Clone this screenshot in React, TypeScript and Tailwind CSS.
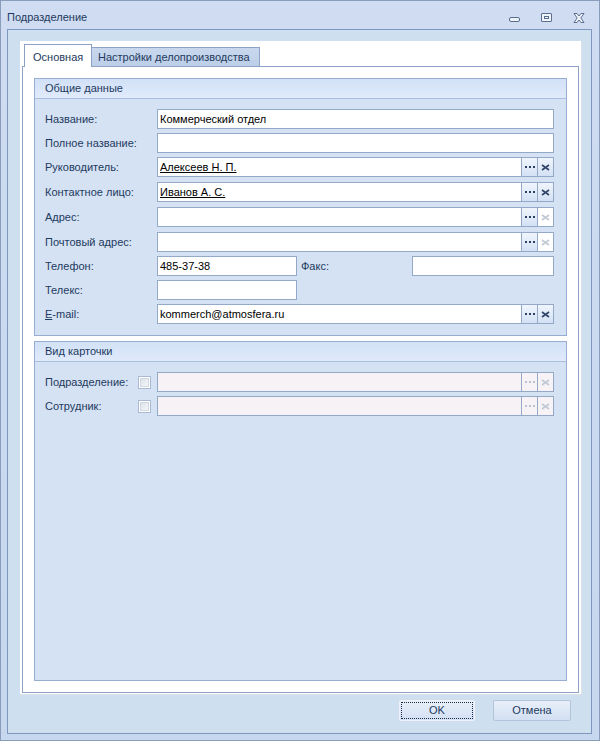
import type { ReactNode } from 'react';

type BtnState = 'on' | 'clearOff' | 'off';

function Dots({ dim }: { dim?: boolean }) {
  return (
    <svg width="10" height="2" viewBox="0 0 10 2" className={dim ? 'fill-[#b9c3d3]' : 'fill-[#2b3f63]'}>
      <rect x="0" y="0" width="2" height="2" />
      <rect x="4" y="0" width="2" height="2" />
      <rect x="8" y="0" width="2" height="2" />
    </svg>
  );
}

function Cross({ dim }: { dim?: boolean }) {
  return (
    <svg width="9" height="7" viewBox="0 0 9 7" className={dim ? 'stroke-[#c2cad6]' : 'stroke-[#33476b]'}>
      <path d="M1 1 L8 6 M8 1 L1 6" strokeWidth="1.7" fill="none" />
    </svg>
  );
}

function Lookup({ value, link, state }: { value?: string; link?: boolean; state: BtnState }) {
  const off = state === 'off';
  const btnOn = 'bg-gradient-to-b from-[#f0f5fc] to-[#d3e1f5]';
  return (
    <div className={`flex h-[20px] flex-1 border border-[#94a8c8] ${off ? 'bg-[#f6f2f6]' : 'bg-white'}`}>
      <div className="flex flex-1 items-center px-[2px] text-black">
        {value && <span className={link ? 'underline' : ''}>{value}</span>}
      </div>
      <div className={`flex w-[16px] items-center justify-center border-l border-[#94a8c8] ${off ? '' : btnOn}`}>
        <Dots dim={off} />
      </div>
      <div
        className={`flex w-[16px] items-center justify-center border-l border-[#94a8c8] ${
          state === 'on' ? btnOn : ''
        }`}
      >
        <Cross dim={state !== 'on'} />
      </div>
    </div>
  );
}

function Input({ value, className = 'flex-1' }: { value?: string; className?: string }) {
  return (
    <div className={`flex h-[20px] items-center border border-[#94a8c8] bg-white px-[2px] text-black ${className}`}>
      {value}
    </div>
  );
}

function Row({ label, className, children }: { label: ReactNode; className: string; children: ReactNode }) {
  return (
    <div className={`flex h-[20px] items-center ${className}`}>
      <div className="w-[112px] shrink-0">{label}</div>
      {children}
    </div>
  );
}

function Check() {
  return (
    <div className="mr-[6px] flex h-[13px] w-[13px] items-center justify-center border border-[#aab9d3] bg-white">
      <div className="h-[9px] w-[9px] border border-[#d2d8e2] bg-gradient-to-br from-[#dde2ea] to-[#f4f6f9]" />
    </div>
  );
}

function GroupHeader({ title }: { title: string }) {
  return (
    <div className="flex h-[20px] items-center border-b border-[#a9bfe0] bg-gradient-to-b from-[#d2e1f7] to-[#e0eafb] pl-[10px]">
      {title}
    </div>
  );
}

export default function App() {
  return (
    <div className="h-[741px] w-[600px] border border-[#8a9cbb] bg-gradient-to-b from-[#cfdcf1] to-[#c6d7ee] font-['Liberation_Sans',Arial,sans-serif] text-[11px] text-[#1e3a5e]">
      {/* title bar */}
      <div className="flex h-[28px] items-center pl-[6px] pt-[5px]">
        <span className="flex-1">Подразделение</span>
        <div className="mr-[14px] flex items-center gap-[21px]">
          <div className="mt-[4px] h-[5px] w-[11px] rounded-[2px] border border-[#5b6e8e] bg-[#eef3fa]" />
          <div className="flex h-[9px] w-[11px] items-center justify-center rounded-[1px] border border-[#5b6e8e] bg-[#eef3fa]">
            <div className="h-[3px] w-[5px] border border-[#5b6e8e]" />
          </div>
          <svg width="12" height="10" viewBox="0 0 12 10">
            <path
              d="M1 0.5 H4 L6 3 L8 0.5 H11 L7.8 5 L11 9.5 H8 L6 7 L4 9.5 H1 L4.2 5 Z"
              fill="#eef3fa"
              stroke="#5b6e8e"
              strokeWidth="1"
            />
          </svg>
        </div>
      </div>

      {/* frame */}
      <div className="ml-[6px] flex h-[705px] w-[585px] flex-col border border-[#7e97bf] bg-[#cedff0]">
        <div className="ml-[12px] mt-[11px] flex h-[653px] w-[561px] flex-col bg-white pb-[1px] shadow-[1px_1px_0_#dde2ea]">
          {/* tabs */}
          <div className="flex h-[25px] items-end pl-[4px]">
            <div className="relative z-10 -mb-px flex h-[23px] w-[68px] items-start border border-b-0 border-[#8da2c4] bg-white pl-[8px] pt-[4px]">
              Основная
            </div>
            <div className="flex h-[19px] w-[168px] items-center border border-b-0 border-l-0 border-[#8da2c4] bg-gradient-to-b from-[#c9d8ed] to-[#bccfe8] pl-[6px]">
              Настройки делопроизводства
            </div>
          </div>

          {/* tab panel */}
          <div className="ml-[2px] flex w-[557px] flex-1 flex-col border border-[#8da2c4] bg-white p-[11px]">
            <div className="border border-[#97add1] bg-[#d5e2f4]">
              <GroupHeader title="Общие данные" />
              <div className="pb-[11px] pl-[10px] pr-[12px] pt-[10px]">
                <Row label="Название:" className="">
                  <Input value="Коммерческий отдел" />
                </Row>
                <Row label="Полное название:" className="mt-[4px]">
                  <Input />
                </Row>
                <Row label="Руководитель:" className="mt-[4px]">
                  <Lookup value="Алексеев Н. П." link state="on" />
                </Row>
                <Row label="Контактное лицо:" className="mt-[5px]">
                  <Lookup value="Иванов А. С." link state="on" />
                </Row>
                <Row label="Адрес:" className="mt-[5px]">
                  <Lookup state="clearOff" />
                </Row>
                <Row label="Почтовый адрес:" className="mt-[5px]">
                  <Lookup state="clearOff" />
                </Row>
                <Row label="Телефон:" className="mt-[4px]">
                  <Input value="485-37-38" className="w-[140px]" />
                  <div className="w-[115px] pl-[4px]">Факс:</div>
                  <Input />
                </Row>
                <Row label="Телекс:" className="mt-[4px]">
                  <Input className="w-[140px]" />
                </Row>
                <Row
                  label={
                    <>
                      <span className="underline">E</span>-mail:
                    </>
                  }
                  className="mt-[4px]"
                >
                  <Lookup value="kommerch@atmosfera.ru" state="on" />
                </Row>
              </div>
            </div>

            <div className="mt-[5px] flex flex-1 flex-col border border-[#97add1] bg-[#d5e2f4]">
              <GroupHeader title="Вид карточки" />
              <div className="pl-[10px] pr-[12px] pt-[10px]">
                <div className="flex h-[20px] items-center">
                  <div className="w-[93px] shrink-0">Подразделение:</div>
                  <Check />
                  <Lookup state="off" />
                </div>
                <div className="mt-[4px] flex h-[20px] items-center">
                  <div className="w-[93px] shrink-0">Сотрудник:</div>
                  <Check />
                  <Lookup state="off" />
                </div>
              </div>
            </div>
          </div>
        </div>

        {/* buttons */}
        <div className="mt-[6px] flex justify-end gap-[18px] pr-[20px]">
          <div className="flex h-[21px] w-[76px] items-center justify-center rounded-[2px] border border-[#eef2f8] bg-gradient-to-b from-[#e8eff9] to-[#d3e0f3] p-[1px]">
            <div className="flex h-full w-full items-center justify-center border border-dotted border-[#1a2a44] text-[#1e3a5e]">
              OK
            </div>
          </div>
          <div className="flex h-[21px] w-[78px] items-center justify-center rounded-[2px] border border-[#b3c4dd] bg-gradient-to-b from-[#e8eff9] to-[#d3e0f3]">
            Отмена
          </div>
        </div>
      </div>
    </div>
  );
}
